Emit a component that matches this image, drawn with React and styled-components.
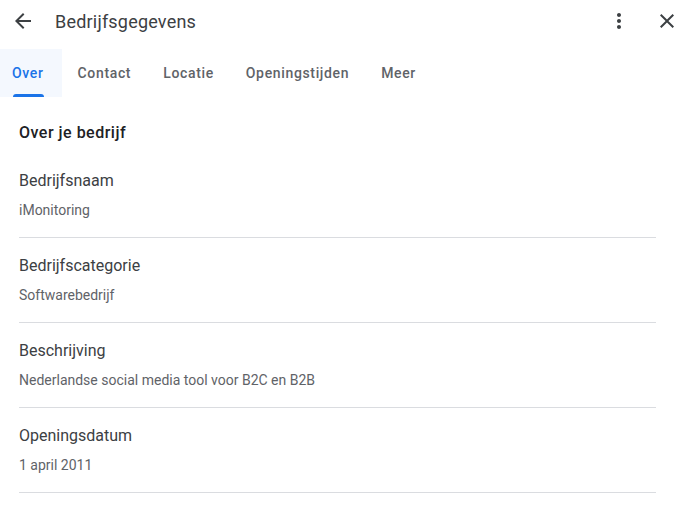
import styled, { createGlobalStyle } from "styled-components";

const GlobalStyle = createGlobalStyle`
	body {
		margin: 0;
		background: #fff;
		font-family: Roboto, "Liberation Sans", sans-serif;
		-webkit-font-smoothing: antialiased;
	}
`;

const Page = styled.div`
	width: 681px;
	height: 506px;
	overflow: hidden;
	background: #fff;
`;

const Header = styled.header`
	display: flex;
	align-items: center;
	height: 42px;
	padding: 0 2px 0 11px;
`;

const IconButton = styled.button`
	display: flex;
	align-items: center;
	justify-content: center;
	width: 24px;
	height: 24px;
	padding: 0;
	border: 0;
	background: none;
	color: #3c4043;
	cursor: pointer;

	svg {
		width: 24px;
		height: 24px;
		fill: currentColor;
	}
`;

const Title = styled.h1`
	flex: 1;
	margin: 0 0 0 20px;
	font-size: 18px;
	font-weight: 400;
	letter-spacing: 0.2px;
	color: #3c4043;
`;

const Actions = styled.div`
	display: flex;
	align-items: center;
	gap: 24px;
`;

const TabBar = styled.nav`
	display: flex;
	height: 48px;
	margin-top: 7px;
`;

const Tab = styled.button`
	position: relative;
	display: flex;
	align-items: center;
	height: 48px;
	padding: 0 16px;
	border: 0;
	font-family: Roboto, "Liberation Sans", sans-serif;
	font-size: 14px;
	font-weight: 500;
	letter-spacing: 0.65px;
	color: ${(props) => (props.active ? "#1a73e8" : "#5f6368")};
	background: ${(props) => (props.active ? "#f4f8fe" : "transparent")};
	cursor: pointer;

	&:first-child {
		padding: 0 18px 0 12px;
	}

	&::after {
		content: "";
		display: ${(props) => (props.active ? "block" : "none")};
		position: absolute;
		left: 13px;
		right: 18px;
		bottom: 0;
		height: 3px;
		border-radius: 3px 3px 0 0;
		background: #1a73e8;
	}
`;

const Content = styled.section`
	padding: 24px 25px 0 19px;
`;

const SectionTitle = styled.h2`
	margin: 0 0 8px;
	font-size: 16px;
	line-height: 24px;
	font-weight: 500;
	letter-spacing: 0.5px;
	color: #202124;
`;

const Field = styled.div`
	padding: 16px 0 17px;
	border-bottom: 1px solid #dadce0;
`;

const Label = styled.div`
	font-size: 16px;
	line-height: 24px;
	color: #3c4043;
`;

const Value = styled.div`
	margin-top: 7px;
	font-size: 14px;
	line-height: 20px;
	color: #5f6368;
`;

const tabs = ["Over", "Contact", "Locatie", "Openingstijden", "Meer"];

const fields = [
	{ label: "Bedrijfsnaam", value: "iMonitoring" },
	{ label: "Bedrijfscategorie", value: "Softwarebedrijf" },
	{ label: "Beschrijving", value: "Nederlandse social media tool voor B2C en B2B" },
	{ label: "Openingsdatum", value: "1 april 2011" },
];

const App = () => {
	return (
		<Page>
			<GlobalStyle />
			<Header>
				<IconButton aria-label="Terug">
					<svg viewBox="0 0 24 24">
						<path d="M20 11H7.83l5.59-5.59L12 4l-8 8 8 8 1.41-1.41L7.83 13H20v-2z" />
					</svg>
				</IconButton>
				<Title>Bedrijfsgegevens</Title>
				<Actions>
					<IconButton aria-label="Meer opties">
						<svg viewBox="0 0 24 24">
							<path d="M12 8c1.1 0 2-.9 2-2s-.9-2-2-2-2 .9-2 2 .9 2 2 2zm0 2c-1.1 0-2 .9-2 2s.9 2 2 2 2-.9 2-2-.9-2-2-2zm0 6c-1.1 0-2 .9-2 2s.9 2 2 2 2-.9 2-2-.9-2-2-2z" />
						</svg>
					</IconButton>
					<IconButton aria-label="Sluiten">
						<svg viewBox="0 0 24 24">
							<path d="M19 6.41L17.59 5 12 10.59 6.41 5 5 6.41 10.59 12 5 17.59 6.41 19 12 13.41 17.59 19 19 17.59 13.41 12z" />
						</svg>
					</IconButton>
				</Actions>
			</Header>
			<TabBar>
				{tabs.map((tab, i) => (
					<Tab key={tab} active={i === 0}>
						{tab}
					</Tab>
				))}
			</TabBar>
			<Content>
				<SectionTitle>Over je bedrijf</SectionTitle>
				{fields.map((field) => (
					<Field key={field.label}>
						<Label>{field.label}</Label>
						<Value>{field.value}</Value>
					</Field>
				))}
			</Content>
		</Page>
	);
};

export default App;
